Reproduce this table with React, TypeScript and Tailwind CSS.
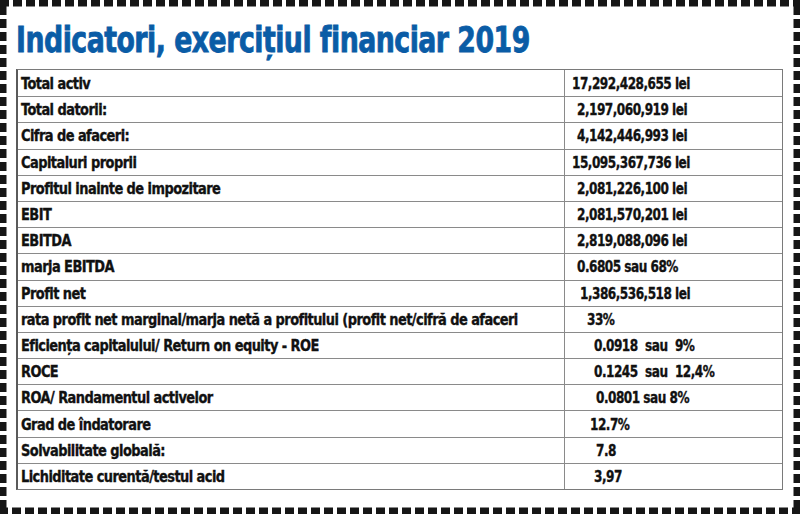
const FONT = "font-['Liberation_Sans_Narrow','DejaVu_Sans_Condensed','Liberation_Sans',sans-serif]";

const ROWS: { label: string; value: string; pad: string }[] = [
  { label: "Total activ", value: "17,292,428,655 lei", pad: "pl-[7px]" },
  { label: "Total datorii:", value: "2,197,060,919 lei", pad: "pl-[12px]" },
  { label: "Cifra de afaceri:", value: "4,142,446,993 lei", pad: "pl-[12px]" },
  { label: "Capitaluri proprii", value: "15,095,367,736 lei", pad: "pl-[7px]" },
  { label: "Profitul inainte de impozitare", value: "2,081,226,100 lei", pad: "pl-[12px]" },
  { label: "EBIT", value: "2,081,570,201 lei", pad: "pl-[12px]" },
  { label: "EBITDA", value: "2,819,088,096 lei", pad: "pl-[12px]" },
  { label: "marja EBITDA", value: "0.6805 sau 68%", pad: "pl-[12px]" },
  { label: "Profit net", value: "1,386,536,518 lei", pad: "pl-[15px]" },
  {
    label: "rata profit net marginal/marja netă a profitului (profit net/cifră de afaceri",
    value: "33%",
    pad: "pl-[22px]",
  },
  { label: "Eficiența capitalului/ Return on equity - ROE", value: "0.0918  sau  9%", pad: "pl-[29px]" },
  { label: "ROCE", value: "0.1245  sau  12,4%", pad: "pl-[29px]" },
  { label: "ROA/ Randamentul activelor", value: "0.0801 sau 8%", pad: "pl-[31px]" },
  { label: "Grad de îndatorare", value: "12.7%", pad: "pl-[25px]" },
  { label: "Solvabilitate globală:", value: "7.8", pad: "pl-[31px]" },
  { label: "Lichiditate curentă/testul acid", value: "3,97", pad: "pl-[29px]" },
];

function DashedFrame() {
  return (
    <svg className="pointer-events-none absolute inset-0" width={800} height={514}>
      <rect
        x={0}
        y={0}
        width={800}
        height={514}
        fill="none"
        stroke="#161616"
        strokeWidth={13}
        strokeDasharray="9 4"
      />
    </svg>
  );
}

export default function App() {
  return (
    <div className={`relative h-[514px] w-[800px] overflow-hidden bg-white ${FONT}`}>
      <div className="pl-[16px] pr-[17px]">
        <div className="flex h-[69px] items-start pt-[20px]">
          <h1 className="inline-block origin-left scale-x-[0.85] whitespace-nowrap text-[35px] leading-[40px] font-bold tracking-[-0.6px] text-[#0a5ca6] [-webkit-text-stroke:0.8px_#0a5ca6]">
            Indicatori, exercițiul financiar 2019
          </h1>
        </div>
        <div className="flex flex-col border border-[#7a7a7a] border-l-2 border-l-[#5a5a5a]">
          {ROWS.map((r, i) => (
            <div
              key={r.label}
              className={`grid h-[26.2px] grid-cols-[546px_1fr] ${i > 0 ? "border-t border-[#8a8a8a]" : ""}`}
            >
              <div className="flex items-center whitespace-nowrap pt-[1px] pl-[3px] text-[16px] font-bold text-[#111] [-webkit-text-stroke:0.35px_#111]">
                <span className="inline-block origin-left scale-x-[0.9] tracking-[-0.6px]">{r.label}</span>
              </div>
              <div
                className={`flex items-center whitespace-pre border-l border-[#8a8a8a] pt-[1px] text-[16px] font-bold text-[#111] [-webkit-text-stroke:0.35px_#111] ${r.pad}`}
              >
                <span className="inline-block origin-left scale-x-[0.84] tracking-[-0.6px]">{r.value}</span>
              </div>
            </div>
          ))}
        </div>
      </div>
      <DashedFrame />
    </div>
  );
}
